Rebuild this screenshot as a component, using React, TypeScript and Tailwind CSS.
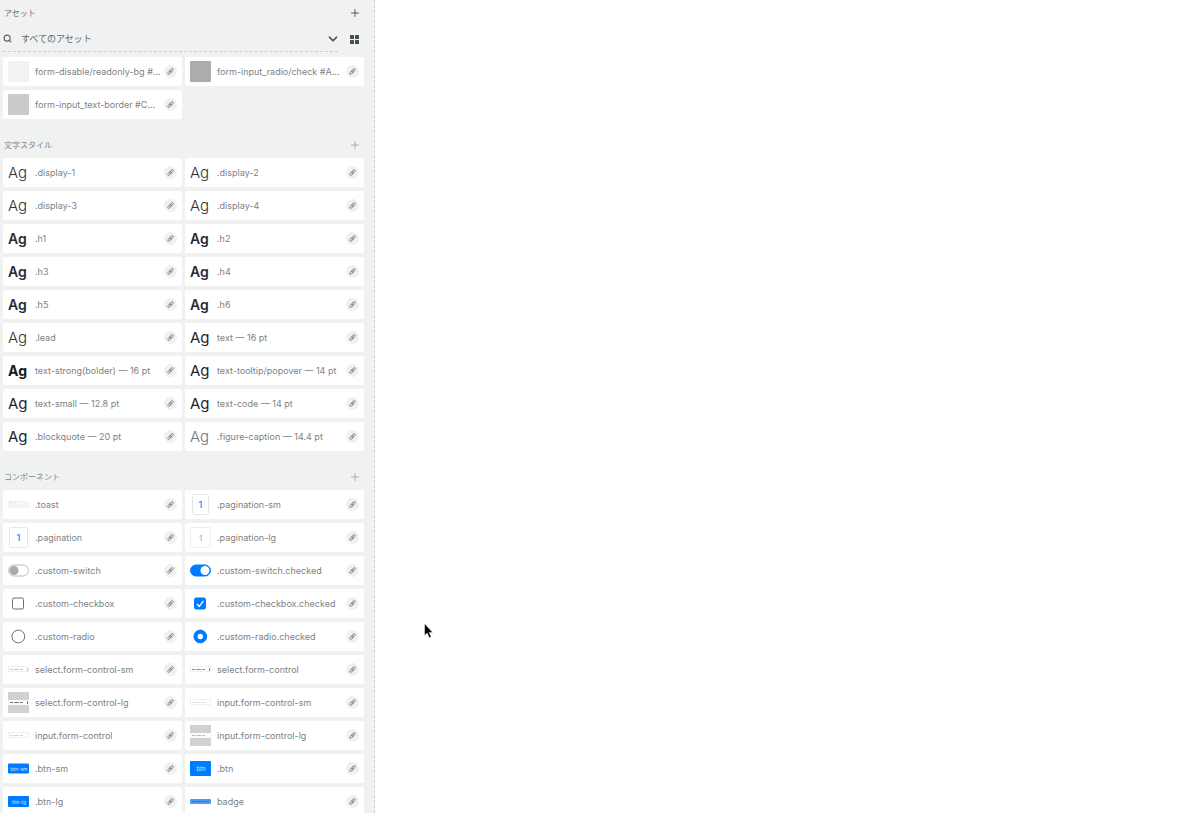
import type { ReactNode } from 'react';
import { Plus, Search, ChevronDown } from 'lucide-react';

interface AssetItem {
  name: string;
  thumb: ReactNode;
}

const AG_STYLES = {
  light: 'text-[15px] font-light text-[#2f3337]',
  regular: 'text-[15px] font-normal text-[#212529]',
  semibold: 'text-[14px] font-semibold text-[#282c30]',
  bold: 'text-[14px] font-bold text-[#16191c]',
  muted: 'text-[15px] font-light text-[#6c757d]',
};

function Ag({ kind }: { kind: keyof typeof AG_STYLES }) {
  return <span className={`leading-5 ${AG_STYLES[kind]}`}>Ag</span>;
}

function Swatch({ className }: { className: string }) {
  return <span className={`block size-[21px] rounded-[1px] ${className}`} />;
}

function PageThumb({ size }: { size: 'sm' | 'md' | 'lg' }) {
  const width = size === 'sm' ? 16 : size === 'md' ? 18 : 20;
  return (
    <svg width="21" height="21" viewBox="0 0 21 21" aria-hidden="true">
      <rect
        x={(21 - width) / 2}
        y="0.5"
        width={width}
        height="20"
        rx="1"
        fill="#fff"
        stroke={size === 'lg' ? '#eceeef' : '#e4e7e9'}
      />
      <text
        x="10.5"
        y="14"
        textAnchor="middle"
        fontSize={size === 'lg' ? 8 : 9}
        fontWeight="600"
        fill={size === 'lg' ? '#7fd0fa' : '#1f9cf5'}
      >
        1
      </text>
    </svg>
  );
}

function ToastThumb() {
  return (
    <svg width="21" height="21" viewBox="0 0 21 21" aria-hidden="true">
      <rect x="0.5" y="7.5" width="20" height="6" rx="1" fill="#fafafa" stroke="#eeefef" />
      <rect x="2" y="8" width="1" height="1" fill="#7cc0f5" />
      <path d="M4 9.5h4M15 9.5h4M2 11.5h16" stroke="#e6e8e8" strokeDasharray="2 1" />
    </svg>
  );
}

function SwitchThumb({ on = false }: { on?: boolean }) {
  return (
    <svg width="21" height="21" viewBox="0 0 21 21" aria-hidden="true">
      <rect
        x="0.5"
        y="5"
        width="20"
        height="11"
        rx="5.5"
        fill={on ? '#007bff' : '#fff'}
        stroke={on ? '#007bff' : '#b9bcbe'}
      />
      <circle cx={on ? 15 : 6} cy="10.5" r="4.5" fill={on ? '#fff' : '#a8aaab'} />
    </svg>
  );
}

function CheckThumb({ on = false }: { on?: boolean }) {
  return (
    <svg width="21" height="21" viewBox="0 0 21 21" fill="none" aria-hidden="true">
      <rect
        x="4.5"
        y="5"
        width="11"
        height="11"
        rx="1.5"
        fill={on ? '#007bff' : '#fff'}
        stroke={on ? '#007bff' : '#6b7075'}
      />
      {on && <path d="M7 10.8l2.2 2.6 4.3-5.6" stroke="#fff" strokeWidth="1.3" />}
    </svg>
  );
}

function RadioThumb({ on = false }: { on?: boolean }) {
  return (
    <svg width="21" height="21" viewBox="0 0 21 21" aria-hidden="true">
      <circle
        cx="10.3"
        cy="10.5"
        r="6.4"
        fill={on ? '#007bff' : '#fff'}
        stroke={on ? '#007bff' : '#6b7074'}
      />
      {on && <circle cx="10.3" cy="10.5" r="2.7" fill="#fff" />}
    </svg>
  );
}

interface FieldThumbProps {
  line: string;
  block?: boolean;
  arrow?: boolean;
}

function FieldThumb({ line, block = false, arrow = false }: FieldThumbProps) {
  return (
    <svg width="21" height="21" viewBox="0 0 21 21" aria-hidden="true">
      {block && <rect width="21" height="21" fill="#d0d1d1" />}
      {block ? (
        <rect y="8" width="21" height="5" fill="#fbfbfb" />
      ) : (
        <rect x="0.5" y="7.5" width="20" height="5" fill="#fff" stroke="#eff0f0" />
      )}
      <path d="M2 10.5h14" stroke={line} strokeDasharray="3 1 5 1" />
      {arrow && <path d="M19.5 9v3" stroke={line} />}
    </svg>
  );
}

function ButtonThumb({ label, height }: { label: string; height: number }) {
  return (
    <svg width="21" height="21" viewBox="0 0 21 21" aria-hidden="true">
      <rect y={(21 - height) / 2} width="21" height={height} rx="1" fill="#007bff" />
      <text x="11" y="12.5" textAnchor="middle" fontSize={label === 'btn' ? 6 : 5} fill="#cfe5ff">
        {label}
      </text>
    </svg>
  );
}

function BadgeThumb() {
  return (
    <svg width="21" height="21" viewBox="0 0 21 21" aria-hidden="true">
      <rect y="8" width="21" height="5" rx="1" fill="#4a9bf8" />
      <path d="M2 10.5h17" stroke="#1b6fd6" strokeDasharray="2 1" />
    </svg>
  );
}

const colors: AssetItem[] = [
  { name: 'form-disable/readonly-bg #...', thumb: <Swatch className="bg-[#f0f3f2]" /> },
  { name: 'form-input_radio/check #A...', thumb: <Swatch className="bg-[#acacac]" /> },
  { name: 'form-input_text-border #C...', thumb: <Swatch className="bg-[#cbcbcb]" /> },
];

const textStyles: AssetItem[] = [
  { name: '.display-1', thumb: <Ag kind="light" /> },
  { name: '.display-2', thumb: <Ag kind="light" /> },
  { name: '.display-3', thumb: <Ag kind="light" /> },
  { name: '.display-4', thumb: <Ag kind="light" /> },
  { name: '.h1', thumb: <Ag kind="semibold" /> },
  { name: '.h2', thumb: <Ag kind="semibold" /> },
  { name: '.h3', thumb: <Ag kind="semibold" /> },
  { name: '.h4', thumb: <Ag kind="semibold" /> },
  { name: '.h5', thumb: <Ag kind="semibold" /> },
  { name: '.h6', thumb: <Ag kind="semibold" /> },
  { name: '.lead', thumb: <Ag kind="light" /> },
  { name: 'text — 16 pt', thumb: <Ag kind="regular" /> },
  { name: 'text-strong(bolder) — 16 pt', thumb: <Ag kind="bold" /> },
  { name: 'text-tooltip/popover — 14 pt', thumb: <Ag kind="regular" /> },
  { name: 'text-small — 12.8 pt', thumb: <Ag kind="regular" /> },
  { name: 'text-code — 14 pt', thumb: <Ag kind="regular" /> },
  { name: '.blockquote — 20 pt', thumb: <Ag kind="regular" /> },
  { name: '.figure-caption — 14.4 pt', thumb: <Ag kind="muted" /> },
];

const components: AssetItem[] = [
  { name: '.toast', thumb: <ToastThumb /> },
  { name: '.pagination-sm', thumb: <PageThumb size="sm" /> },
  { name: '.pagination', thumb: <PageThumb size="md" /> },
  { name: '.pagination-lg', thumb: <PageThumb size="lg" /> },
  { name: '.custom-switch', thumb: <SwitchThumb /> },
  { name: '.custom-switch.checked', thumb: <SwitchThumb on /> },
  { name: '.custom-checkbox', thumb: <CheckThumb /> },
  { name: '.custom-checkbox.checked', thumb: <CheckThumb on /> },
  { name: '.custom-radio', thumb: <RadioThumb /> },
  { name: '.custom-radio.checked', thumb: <RadioThumb on /> },
  { name: 'select.form-control-sm', thumb: <FieldThumb line="#c4c6c6" arrow /> },
  { name: 'select.form-control', thumb: <FieldThumb line="#8d9092" arrow /> },
  { name: 'select.form-control-lg', thumb: <FieldThumb line="#75787a" block arrow /> },
  { name: 'input.form-control-sm', thumb: <FieldThumb line="#dfe1e1" /> },
  { name: 'input.form-control', thumb: <FieldThumb line="#d4d6d6" /> },
  { name: 'input.form-control-lg', thumb: <FieldThumb line="#bcbebe" block /> },
  { name: '.btn-sm', thumb: <ButtonThumb label="btn-sm" height={10} /> },
  { name: '.btn', thumb: <ButtonThumb label="btn" height={15} /> },
  { name: '.btn-lg', thumb: <ButtonThumb label="btn-lg" height={11} /> },
  { name: 'badge', thumb: <BadgeThumb /> },
];

function LinkIcon() {
  return (
    <svg width="9" height="9" viewBox="0 0 9 9" fill="none" stroke="currentColor" aria-hidden="true">
      <g transform="rotate(-48 4.5 4.5)" strokeWidth="0.8">
        <rect x="1" y="3.5" width="4.2" height="2" rx="1" />
        <rect x="3.8" y="3.5" width="4.2" height="2" rx="1" />
      </g>
    </svg>
  );
}

function AssetCard({ item }: { item: AssetItem }) {
  return (
    <li className="flex h-[29px] min-w-0 items-center rounded-[2px] bg-white px-[5px]">
      <span className="mr-1.5 flex w-[21px] shrink-0 items-center">{item.thumb}</span>
      <span className="min-w-0 flex-1 truncate text-[9px] leading-[15px] text-[#808282]">{item.name}</span>
      <button
        type="button"
        aria-label={`${item.name} link`}
        className="flex size-[13px] shrink-0 items-center justify-center rounded-full bg-[#eff1f0] text-[#6c6f6f]"
      >
        <LinkIcon />
      </button>
    </li>
  );
}

function AssetGrid({ items }: { items: AssetItem[] }) {
  return (
    <ul className="grid grid-cols-2 gap-x-[3px] gap-y-1">
      {items.map((item) => (
        <AssetCard key={item.name} item={item} />
      ))}
    </ul>
  );
}

function Section({ title, items }: { title: string; items: AssetItem[] }) {
  return (
    <section>
      <header className="flex h-[39px] items-center justify-between pt-3 pr-[3px] pl-px">
        <h2 className="text-[8px] leading-3 text-[#858787]">{title}</h2>
        <button type="button" aria-label={`${title} +`} className="text-[#a9abab]">
          <Plus className="size-3" strokeWidth={2} />
        </button>
      </header>
      <AssetGrid items={items} />
    </section>
  );
}

function GridIcon() {
  return (
    <svg width="9" height="9" viewBox="0 0 9 9" fill="currentColor" aria-hidden="true">
      <rect width="4" height="4" rx="0.5" />
      <rect x="5" width="4" height="4" rx="0.5" />
      <rect y="5" width="4" height="4" rx="0.5" />
      <rect x="5" y="5" width="4" height="4" rx="0.5" />
    </svg>
  );
}

export default function App() {
  return (
    <div className="flex h-screen overflow-hidden bg-white font-['Inter','Noto_Sans_CJK_JP',sans-serif]">
      <aside className="w-[375px] shrink-0 overflow-hidden border-r border-dashed border-[#cfd1d0] bg-[#f0f2f1] pr-[10px] pl-[3px]">
        <header className="flex h-[26px] items-center justify-between pr-[3px] pl-px">
          <h1 className="text-[8px] leading-3 text-[#6f7171]">アセット</h1>
          <button type="button" aria-label="追加" className="text-[#555858]">
            <Plus className="size-3" strokeWidth={2} />
          </button>
        </header>

        <div className="mb-[5px] flex h-[26px] items-center gap-3 pr-[5px]">
          <div className="relative flex h-full flex-1 items-center border-b border-dashed border-[#cbcdcc]">
            <Search className="size-[9px] shrink-0 text-[#606363]" strokeWidth={3} />
            <select
              aria-label="アセットを検索"
              className="ml-[9px] h-full flex-1 appearance-none bg-transparent text-[9px] text-[#636666] outline-none"
            >
              <option>すべてのアセット</option>
            </select>
            <ChevronDown
              className="pointer-events-none absolute -right-0.5 size-3.5 text-[#4a4d4d]"
              strokeWidth={3}
            />
          </div>
          <button type="button" aria-label="グリッド表示" className="text-[#4a4d4d]">
            <GridIcon />
          </button>
        </div>

        <AssetGrid items={colors} />
        <Section title="文字スタイル" items={textStyles} />
        <Section title="コンポーネント" items={components} />
      </aside>

      <main className="relative flex-1">
        <svg
          className="absolute top-[623px] left-[49px]"
          width="10"
          height="16"
          viewBox="0 0 10 16"
          aria-hidden="true"
        >
          <path d="M0.5 0.5v12l2.7-2.4 2 4.7 2-.9-2-4.5h3.5z" fill="#000" stroke="#fff" strokeWidth="0.5" />
        </svg>
      </main>
    </div>
  );
}
